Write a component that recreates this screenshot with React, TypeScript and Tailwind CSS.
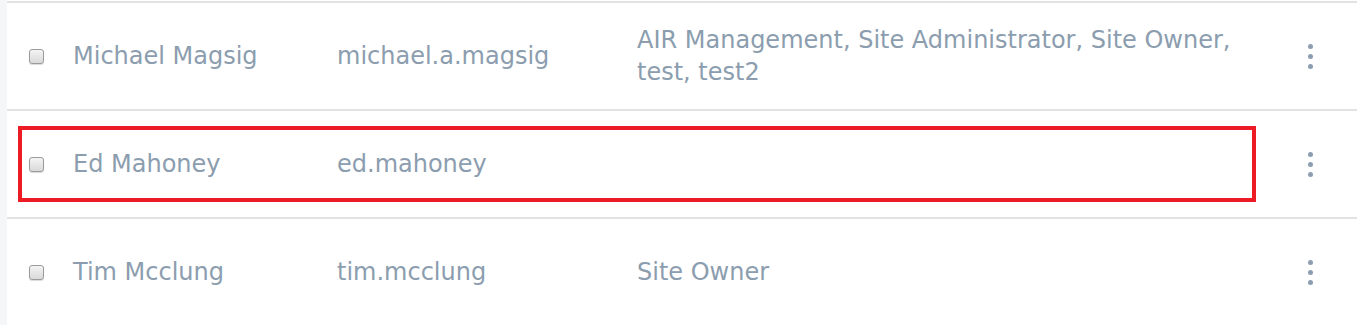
import React from "react";

type User = { name: string; login: string; roles: string; highlight?: boolean };

const users: User[] = [
  {
    name: "Michael Magsig",
    login: "michael.a.magsig",
    roles: "AIR Management, Site Administrator, Site Owner, test, test2",
  },
  { name: "Ed Mahoney", login: "ed.mahoney", roles: "", highlight: true },
  { name: "Tim Mcclung", login: "tim.mcclung", roles: "Site Owner" },
];

function FakeCheckbox() {
  return (
    <div className="w-[15px] h-[15px] rounded-[3px] border border-[#9b9b9b] bg-gradient-to-b from-[#f4f4f4] to-[#d9d9d9] shadow-[0_1px_1px_rgba(0,0,0,0.15)]" />
  );
}

function Kebab() {
  return (
    <div className="flex flex-col items-center gap-[5px]">
      <span className="w-[5px] h-[5px] rounded-full bg-[#8c9db0]" />
      <span className="w-[5px] h-[5px] rounded-full bg-[#8c9db0]" />
      <span className="w-[5px] h-[5px] rounded-full bg-[#8c9db0]" />
    </div>
  );
}

export default function App() {
  return (
    <div className="flex w-[1357px] h-[325px] overflow-hidden bg-white">
      <div className="w-[7px] shrink-0 bg-[#f5f6f8]" />
      <div
        className="flex-1 pt-px text-[#8b9dae] text-[24px] leading-[32px]"
        style={{ fontFamily: '"DejaVu Sans", "Open Sans", sans-serif' }}
      >
        {users.map((u) => (
          <div
            key={u.login}
            className="relative border-t-2 border-[#e2e2e2] h-[108px] grid grid-cols-[44px_264px_300px_610px_1fr] items-center pl-[22px]"
          >
            <FakeCheckbox />
            <div>{u.name}</div>
            <div>{u.login}</div>
            <div>{u.roles}</div>
            <div className="flex justify-center pl-[16px]">
              <Kebab />
            </div>
            {u.highlight && (
              <div className="absolute left-[11px] top-[15px] w-[1238px] h-[76px] border-4 border-[#ed1c24] pointer-events-none" />
            )}
          </div>
        ))}
      </div>
    </div>
  );
}
